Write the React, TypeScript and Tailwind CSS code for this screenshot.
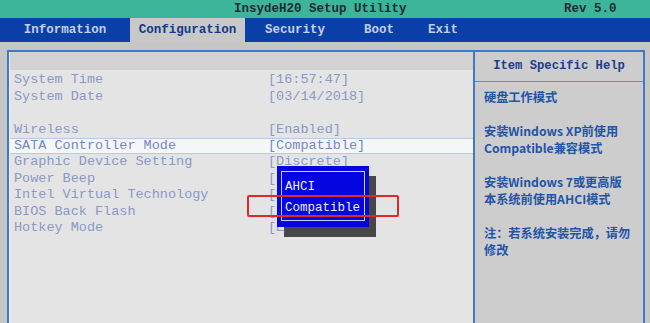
const rows: { label: string; value: string }[] = [
  { label: 'System Time', value: '[16:57:47]' },
  { label: 'System Date', value: '[03/14/2018]' },
  { label: '', value: '' },
  { label: 'Wireless', value: '[Enabled]' },
  { label: 'SATA Controller Mode', value: '[Compatible]' },
  { label: 'Graphic Device Setting', value: '[Discrete]' },
  { label: 'Power Beep', value: '[Enabled]' },
  { label: 'Intel Virtual Technology', value: '[Enabled]' },
  { label: 'BIOS Back Flash', value: '[Enabled]' },
  { label: 'Hotkey Mode', value: '[Enabled]' },
];

const tabs = [
  { name: 'Information', w: 'w-[130px]' },
  { name: 'Configuration', w: 'w-[115px]' },
  { name: 'Security', w: 'w-[100px]' },
  { name: 'Boot', w: 'w-[68px]' },
  { name: 'Exit', w: 'w-[60px]' },
];

export default function App() {
  return (
    <div className="w-[650px] h-[323px] overflow-hidden bg-[#c6c6c6] font-['Liberation_Mono',monospace]">
      {/* Title bar */}
      <div className="h-[18px] bg-[#3db59b] flex items-center text-[12.5px] font-bold text-[#1d2b33]">
        <div className="w-[234px]" />
        <div className="w-[330px]">InsydeH20 Setup Utility</div>
        <div>Rev 5.0</div>
      </div>

      {/* Menu bar */}
      <div className="h-[24px] bg-[#0b3fa8] flex text-[12.5px] font-bold text-[#c4d0ea]">
        {tabs.map((t) => (
          <div
            key={t.name}
            className={`${t.w} flex items-center justify-center ${
              t.name === 'Configuration' ? 'bg-[#c8c8c8] text-[#0e3a8c]' : ''
            }`}
          >
            {t.name}
          </div>
        ))}
      </div>

      {/* Body */}
      <div className="flex pt-[8px] pl-[7px] h-[281px]">
        {/* Left panel */}
        <div className="relative w-[466px] h-full border-l-2 border-t-2 border-[#3f7bc4] flex flex-col">
          <div className="h-[18px] bg-[#d2d2d2] border-l border-[#e8f0fa]" />
          <div className="flex-1 bg-[#e4e4e4] border-l border-[#e8f0fa] pt-[2px]">
            {rows.map((r, i) => (
              <div
                key={i}
                className={`h-[16.4px] flex items-center text-[13.5px] leading-none ${
                  r.label === 'SATA Controller Mode'
                    ? 'bg-[#f5f7fa] border-y border-[#b4cbe6] text-[#7587bd]'
                    : 'text-[#8a99c6]'
                }`}
              >
                <div className="w-[258px] pl-[4px]">{r.label}</div>
                <div>{r.value}</div>
              </div>
            ))}
          </div>

          {/* Popup shadow */}
          <div className="absolute left-[275px] top-[124px] w-[92px] h-[61px] bg-[#474747]" />
          {/* Popup */}
          <div className="absolute left-[268px] top-[114px] w-[92px] h-[61px] bg-[#0505e0] p-[4px] pt-[5px]">
            <div className="h-[50px] border border-[#c8d0ff] pl-[3px] pt-[5px] text-[12.5px] text-[#eef0ff] leading-[21px]">
              <div>AHCI</div>
              <div>Compatible</div>
            </div>
          </div>
          {/* Red highlight */}
          <div className="absolute left-[238px] top-[143px] w-[152px] h-[22px] border-2 border-[#e02828] rounded-[2px]" />
        </div>

        {/* Right panel */}
        <div className="w-[172px] h-full border-2 border-b-0 border-[#3f7bc4] bg-[#cdcdcd]">
          <div className="h-[30px] border-b border-[#5a8ccc] flex items-center justify-center text-[12.2px] font-bold text-[#1b3d8e]">
            Item Specific Help
          </div>
          <div className="pl-[9px] pt-[7px] text-[12.2px] font-bold leading-[17px] text-[#2254a8] font-['Noto_Sans_CJK_SC',sans-serif]">
            <div>硬盘工作模式</div>
            <div className="h-[17px]" />
            <div>安装Windows XP前使用</div>
            <div>Compatible兼容模式</div>
            <div className="h-[17px]" />
            <div>安装Windows 7或更高版</div>
            <div>本系统前使用AHCI模式</div>
            <div className="h-[17px]" />
            <div>注：若系统安装完成，请勿</div>
            <div>修改</div>
          </div>
        </div>
      </div>
    </div>
  );
}
